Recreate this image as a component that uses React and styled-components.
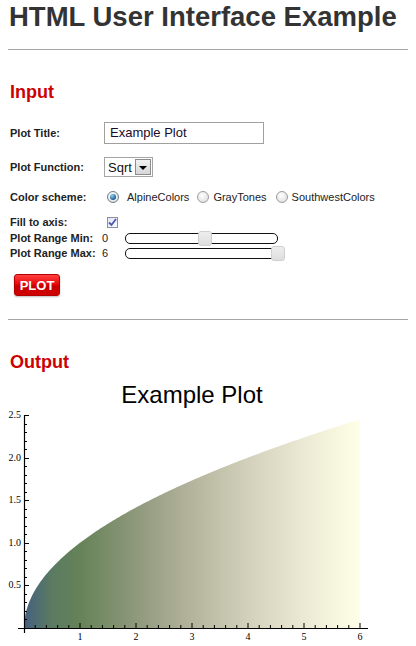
import styled, { createGlobalStyle } from 'styled-components'

const GlobalStyle = createGlobalStyle`
    html, body {
        margin: 0;
        padding: 0;
        background: #fff;
    }
    body {
        font-family: "Liberation Sans", Arial, sans-serif;
    }
`

const Page = styled.div`
    width: 416px;
    padding: 4px 8px 0 8px;
    box-sizing: border-box;
`

const Title = styled.h1`
    margin: -1px 0 0 1px;
    font-size: 27.5px;
    line-height: 28px;
    font-weight: bold;
    color: #333;
    white-space: nowrap;
`

const Rule = styled.div`
    margin-top: ${props => props.top}px;
    border-top: 1px solid #a6a6a6;
`

const Heading = styled.h2`
    margin: ${props => props.top}px 0 0 2px;
    font-size: 18px;
    line-height: 22px;
    font-weight: bold;
    color: #cc0000;
`

const Row = styled.div`
    display: flex;
    align-items: center;
    height: ${props => props.height}px;
    margin-top: ${props => props.top}px;
`

const Label = styled.div`
    width: ${props => props.width || 96}px;
    flex: none;
    padding-left: 2px;
    box-sizing: border-box;
    font-size: 11px;
    font-weight: bold;
    color: #222;
    white-space: nowrap;
`

const TextBox = styled.div`
    width: 160px;
    height: 22px;
    box-sizing: border-box;
    border: 1px solid #a0a0a0;
    padding: 0 5px;
    font-size: 13px;
    line-height: 20px;
    color: #1a0a2a;
`

const Select = styled.div`
    display: flex;
    align-items: center;
    width: 49px;
    height: 20px;
    box-sizing: border-box;
    border: 1px solid #a5a5a5;
    padding: 0 1px 0 3px;
    font-size: 13px;
    color: #111;
    justify-content: space-between;
`

const DropButton = styled.div`
    width: 16px;
    height: 16px;
    box-sizing: border-box;
    border: 1px solid #8c8c8c;
    background: linear-gradient(#f2f2f2, #d6d6d6);
    display: flex;
    align-items: center;
    justify-content: center;
    &::after {
        content: '';
        border-left: 4px solid transparent;
        border-right: 4px solid transparent;
        border-top: 4px solid #000;
        margin-top: 1px;
    }
`

const Radio = styled.span`
    flex: none;
    width: 12px;
    height: 12px;
    box-sizing: border-box;
    border-radius: 50%;
    margin-left: ${props => props.left}px;
    border: 1px solid ${props => props.checked ? '#6a7d8f' : '#9c9c9c'};
    background: radial-gradient(circle at 40% 35%, #ffffff, #d8d8d8);
    display: flex;
    align-items: center;
    justify-content: center;
    &::after {
        content: '';
        display: ${props => props.checked ? 'block' : 'none'};
        width: 6px;
        height: 6px;
        border-radius: 50%;
        background: radial-gradient(circle at 35% 30%, #8fd3f5, #1c5b93 70%);
    }
`

const RadioText = styled.span`
    margin-left: ${props => props.left}px;
    font-size: 11px;
    color: #222;
    white-space: nowrap;
`

const Check = styled.span`
    width: 11px;
    height: 11px;
    margin-left: 3px;
    box-sizing: border-box;
    border: 1px solid #8a8fa6;
    background: linear-gradient(135deg, #e4e6f0, #fafbff);
    display: flex;
    align-items: center;
    justify-content: center;
`

const Value = styled.div`
    width: 23px;
    flex: none;
    font-size: 11px;
    color: #222;
`

const Track = styled.div`
    position: relative;
    width: 153px;
    height: 11px;
    box-sizing: border-box;
    border: 1px solid #111;
    border-radius: 5px;
    background: #fff;
`

const Thumb = styled.span`
    position: absolute;
    top: -3px;
    left: ${props => props.left};
    width: 14px;
    height: 15px;
    box-sizing: border-box;
    border: 1px solid #cfcfcf;
    border-radius: 3px;
    background: linear-gradient(#eeeeee, #dedede);
`

const PlotButton = styled.button`
    display: block;
    margin: 14px 0 0 6px;
    width: 46px;
    height: 22px;
    padding: 0;
    border: 1px solid #b30000;
    border-radius: 3px;
    background: linear-gradient(#ff4040 0%, #e80a0a 45%, #c80000 55%, #d00000 100%);
    box-shadow: 0 1px 2px rgba(0, 0, 0, 0.25);
    color: #fff;
    font-family: "Liberation Sans", Arial, sans-serif;
    font-size: 13px;
    font-weight: bold;
`

const Chart = styled.svg`
    display: block;
    margin-top: 5px;
`

const ox = 16
const oy = 250
const sx = 56
const sy = 85.2

function curve() {
    let d = `M${ox} ${oy}`
    for (let i = 0; i <= 240; i++) {
        const x = (i / 240) * 6
        d += ` L${(ox + x * sx).toFixed(2)} ${(oy - Math.sqrt(x) * sy).toFixed(2)}`
    }
    d += ` L${ox + 6 * sx} ${oy} Z`
    return d
}

function Plot() {
    const xTicks = []
    for (let i = 1; i <= 30; i++) {
        const x = ox + i * 0.2 * sx
        const major = i % 5 === 0
        xTicks.push(<line key={'x' + i} x1={x} x2={x} y1={oy} y2={oy - (major ? 5 : 3)} stroke="#000" strokeWidth="1" />)
    }
    const yTicks = []
    for (let i = 1; i <= 25; i++) {
        const y = Math.round(oy - i * 0.1 * sy) + 0.5
        const major = i % 5 === 0
        yTicks.push(<line key={'y' + i} x1={ox} x2={ox + (major ? 5 : 3)} y1={y} y2={y} stroke="#000" strokeWidth="1" />)
    }
    const yLabels = ['0.5', '1.0', '1.5', '2.0', '2.5']
    return (
        <Chart width="400" height="268" viewBox="0 0 400 268">
            <defs>
                <linearGradient id="alpine" gradientUnits="userSpaceOnUse" x1={ox} y1="0" x2={ox + 6 * sx} y2="0">
                    <stop offset="0" stopColor="#45607f" />
                    <stop offset="0.08" stopColor="#5a7a62" />
                    <stop offset="0.17" stopColor="#668358" />
                    <stop offset="0.33" stopColor="#8e987b" />
                    <stop offset="0.5" stopColor="#b4b49d" />
                    <stop offset="0.67" stopColor="#d3d1bb" />
                    <stop offset="0.83" stopColor="#ebe9d3" />
                    <stop offset="1" stopColor="#fffee6" />
                </linearGradient>
            </defs>
            <text x="184" y="25" textAnchor="middle" fontFamily="Liberation Sans, Arial, sans-serif" fontSize="24" fill="#000">Example Plot</text>
            <path d={curve()} fill="url(#alpine)" />
            <line x1={ox - 6} x2={ox + 6 * sx + 8} y1={oy + 0.5} y2={oy + 0.5} stroke="#000" strokeWidth="1.2" />
            <line x1={ox + 0.5} x2={ox + 0.5} y1={oy - 2.5 * sy} y2={oy + 5} stroke="#000" strokeWidth="1.2" />
            {xTicks}
            {yTicks}
            {[1, 2, 3, 4, 5, 6].map(n => (
                <text key={n} x={ox + n * sx} y={oy + 12} textAnchor="middle" fontFamily="Liberation Serif, serif" fontSize="10" fill="#000">{n}</text>
            ))}
            {yLabels.map((t, i) => (
                <text key={t} x={ox - 3} y={oy - (i + 1) * 0.5 * sy + 3} textAnchor="end" fontFamily="Liberation Serif, serif" fontSize="10" fill="#000">{t}</text>
            ))}
        </Chart>
    )
}

export default function App() {
    return (
        <>
            <GlobalStyle />
            <Page>
                <Title>HTML User Interface Example</Title>
                <Rule top={18} />
                <Heading top={31}>Input</Heading>

                <Row height={22} top={19}>
                    <Label>Plot Title:</Label>
                    <TextBox>Example Plot</TextBox>
                </Row>
                <Row height={20} top={13}>
                    <Label>Plot Function:</Label>
                    <Select>
                        <span>Sqrt</span>
                        <DropButton />
                    </Select>
                </Row>
                <Row height={16} top={12}>
                    <Label>Color scheme:</Label>
                    <Radio checked left={3} />
                    <RadioText left={8}>AlpineColors</RadioText>
                    <Radio left={8} />
                    <RadioText left={4}>GrayTones</RadioText>
                    <Radio left={9} />
                    <RadioText left={4}>SouthwestColors</RadioText>
                </Row>
                <Row height={14} top={10}>
                    <Label>Fill to axis:</Label>
                    <Check>
                        <svg width="9" height="9" viewBox="0 0 9 9">
                            <path d="M1 4.5 L3.5 7 L8 1" fill="none" stroke="#4b57b0" strokeWidth="1.8" />
                        </svg>
                    </Check>
                </Row>
                <Row height={14} top={2}>
                    <Label width={94}>Plot Range Min:</Label>
                    <Value>0</Value>
                    <Track>
                        <Thumb left="calc(52% - 7px)" />
                    </Track>
                </Row>
                <Row height={14} top={1}>
                    <Label width={94}>Plot Range Max:</Label>
                    <Value>6</Value>
                    <Track>
                        <Thumb left="calc(100% - 6px)" />
                    </Track>
                </Row>

                <PlotButton>PLOT</PlotButton>
                <Rule top={23} />
                <Heading top={31}>Output</Heading>
                <Plot />
            </Page>
        </>
    )
}
